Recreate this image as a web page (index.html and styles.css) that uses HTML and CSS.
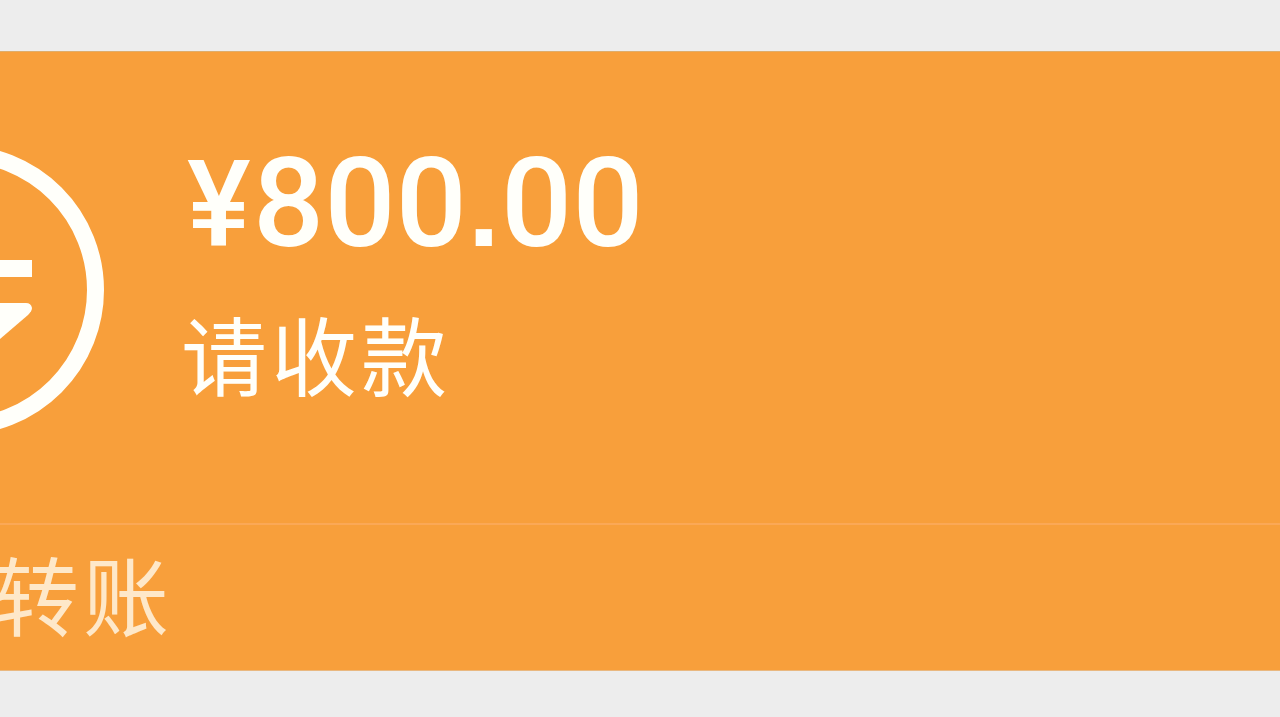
FILE: index.html
```
<!DOCTYPE html>
<html lang="zh-Hans">
<head>
    <meta charset="UTF-8">
    <meta name="viewport" content="width=device-width, initial-scale=1.0">
    <title>转账</title>
    <link rel="stylesheet" href="styles.css">
</head>
<body>
    <div class="transfer">
        <div class="main">
            <svg class="icon" width="104" height="290" viewBox="0 0 104 290">
                <circle cx="-41" cy="145" r="136.5" fill="none" stroke="#fffffa" stroke-width="17"/>
                <path d="M0 115H32V132H0Z" fill="#fffffa"/>
                <path d="M0 158H26Q31 158 32 163Q32 166 28 170L0 194Z" fill="#fffffa"/>
            </svg>
            <div class="info">
                <div class="amount"><span class="yen">¥</span>800<span class="dot">.</span>00</div>
                <div class="desc">请收款</div>
            </div>
        </div>
        <div class="footer">转账</div>
    </div>
</body>
</html>
```
FILE: styles.css
```
* {
    box-sizing: border-box;
    margin: 0;
    padding: 0;
}
body {
    height: 717px;
    padding-top: 51px;
    background: #ededed;
    color: #fffffa;
    overflow: hidden;
}
.transfer {
    height: 620px;
    background: #f89f3b;
    border-top: 1px solid #dfad6b;
    border-bottom: 1px solid #e9b880;
}
.main {
    display: flex;
    height: 473px;
    padding-top: 93px;
    border-bottom: 2px solid #fba856;
}
.icon {
    flex: none;
}
.info {
    padding-top: 3px;
    padding-left: 83px;
}
.amount {
    height: 112px;
    font: 500 125px/112px Roboto, sans-serif;
    letter-spacing: 0.3px;
    white-space: nowrap;
}
.yen {
    margin-right: 2px;
    font-size: 120px;
}
.dot {
    font: bold 114px/1 "Liberation Sans", sans-serif;
    margin: 0 1px;
}
.desc {
    margin-top: 43px;
    margin-left: -6px;
    font: 400 86px/100px "Noto Sans CJK SC", sans-serif;
    letter-spacing: 4px;
}
.footer {
    padding-top: 18px;
    margin-left: -7px;
    font: 400 86px/100px "Noto Sans CJK SC", sans-serif;
    letter-spacing: 4px;
    color: #fee8c9;
}
```
